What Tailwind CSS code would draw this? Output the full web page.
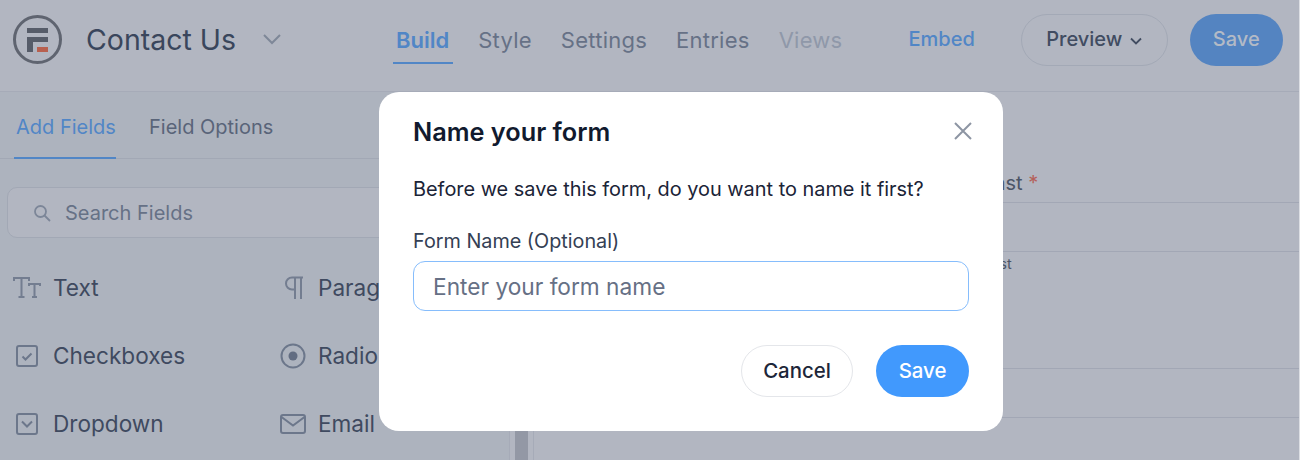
<!DOCTYPE html>
<html lang="en">
<head>
  <meta charset="UTF-8" />
  <meta name="viewport" content="width=device-width, initial-scale=1.0" />
  <title>Contact Us</title>
  <script src="https://cdn.jsdelivr.net/npm/@tailwindcss/browser@4"></script>
</head>
<body class="bg-[#b2b6c1] font-['Inter',sans-serif]">
  <div class="relative w-[1300px] h-[460px] overflow-hidden border-r border-[#dcdee3] box-border">

    <!-- top bar -->
    <header class="h-[92px] flex items-start border-b border-[#a6abb8]">
      <svg class="mt-[15px] ml-[13px] shrink-0" width="50" height="50" viewBox="0 0 50 50">
        <circle cx="24.5" cy="24.5" r="23" fill="none" stroke="#5f6470" stroke-width="3"/>
        <path d="M14 13h21v5H14zM14 22h21v5H20v10h-6z" fill="#565c69"/>
        <path d="M24 32h11v5H24z" fill="#b8604f"/>
      </svg>
      <span class="ml-[23px] mt-[21px] text-[28.5px] leading-[38px] text-[#3a465c] w-[150px] whitespace-nowrap">Contact Us</span>
      <svg class="ml-[27px] mt-[33px]" width="18" height="12" viewBox="0 0 18 12"><path d="M1 2l8 8 8-8" fill="none" stroke="#7e8798" stroke-width="2"/></svg>
      <nav class="ml-[115px] flex gap-[29px] text-[22px] tracking-[0.25px] leading-[30px] h-[65px] pt-[25px]">
        <a class="relative font-semibold tracking-normal text-[#5186c6]">Build<span class="absolute -left-[3px] -right-[4px] top-[37px] h-[2px] bg-[#5186c6]"></span></a>
        <a class="text-[#667186]">Style</a>
        <a class="text-[#667186]">Settings</a>
        <a class="text-[#667186]">Entries</a>
        <a class="text-[#8f98a9]">Views</a>
      </nav>
      <a class="ml-[66px] mt-[26px] text-[20px] leading-[26px] font-medium text-[#5186c6]">Embed</a>
      <button class="ml-[46px] mt-[14px] w-[147px] h-[52px] rounded-full border border-[#a3a9b6] flex items-center justify-center gap-[8px] pb-[2px] text-[20px] font-medium text-[#414c61]">
        Preview
        <svg class="mt-[3px]" width="12" height="8" viewBox="0 0 12 8"><path d="M1 1.5l5 5 5-5" fill="none" stroke="#414c61" stroke-width="1.8"/></svg>
      </button>
      <button class="ml-[22px] mt-[14px] w-[93px] h-[52px] rounded-full bg-[#5484c1] pb-[2px] text-[20px] font-medium text-[#b3bac6]">Save</button>
    </header>

    <div class="flex h-[368px]">
      <!-- field sidebar -->
      <aside class="w-[510px] shrink-0 bg-[#adb3be] border-r border-[#a6abb8]">
        <div class="h-[67px] flex items-start border-b border-[#a2a8b5] pl-[14px]">
          <a class="mt-[20px] relative h-[46px] w-[102px] pl-[2px] text-[20px] leading-[30px] text-[#5186c6]">Add Fields<span class="absolute left-0 right-0 bottom-[-1px] h-[2px] bg-[#5186c6]"></span></a>
          <a class="mt-[20px] ml-[33px] text-[20px] leading-[30px] text-[#596479]">Field Options</a>
        </div>
        <div class="ml-[7px] mt-[28px] h-[51px] w-[500px] rounded-[10px] border border-[#a2a8b5] bg-[#b2b6c1] flex items-center pl-[25px]">
          <svg width="18" height="18" viewBox="0 0 18 18" fill="none" stroke="#7c8698" stroke-width="1.8"><circle cx="7.5" cy="7.5" r="5.5"/><path d="M11.5 11.5l5.5 5.5"/></svg>
          <span class="ml-[14px] text-[20px] text-[#667186]">Search Fields</span>
        </div>
        <ul class="mt-[35px] grid grid-cols-[267px_1fr] gap-y-[38px] pl-[13px] text-[22.6px] leading-[30px] text-[#3f4a60] whitespace-nowrap">
          <li class="flex items-center">
            <svg width="28" height="24" viewBox="0 0 28 24" fill="none" stroke="#737d90" stroke-width="2"><path d="M1 5V2h15v3M8.500 2v19M5.500 21h6M16 10V8h11v2M21.500 8v13M19 21h5"/></svg>
            <span class="ml-[12px]">Text</span>
          </li>
          <li class="flex items-center">
            <svg class="ml-[3px]" width="22" height="24" viewBox="0 0 22 24" fill="none" stroke="#737d90" stroke-width="2"><path d="M20 1.500H9a6 6 0 0 0 0 12h3M12 1.500V23M18 1.500V23"/></svg>
            <span class="ml-[13px]">Paragraph</span>
          </li>
          <li class="flex items-center">
            <svg class="ml-[3px]" width="22" height="22" viewBox="0 0 22 22" fill="none" stroke="#6c778b" stroke-width="2"><rect x="1" y="1" width="20" height="20" rx="2"/><path d="M6.500 11.500l3 3 6-6"/></svg>
            <span class="ml-[15px]">Checkboxes</span>
          </li>
          <li class="flex items-center">
            <svg width="26" height="26" viewBox="0 0 26 26"><circle cx="13" cy="13" r="11.500" fill="none" stroke="#6c778b" stroke-width="2"/><circle cx="13" cy="13" r="4.500" fill="#626d82"/></svg>
            <span class="ml-[12px]">Radio Buttons</span>
          </li>
          <li class="flex items-center">
            <svg class="ml-[3px]" width="22" height="22" viewBox="0 0 22 22" fill="none" stroke="#6c778b" stroke-width="2"><rect x="1" y="1" width="20" height="20" rx="2"/><path d="M6 8.500l5 5 5-5"/></svg>
            <span class="ml-[15px]">Dropdown</span>
          </li>
          <li class="flex items-center">
            <svg width="26" height="20" viewBox="0 0 26 20" fill="none" stroke="#6c778b" stroke-width="2"><rect x="1" y="1" width="24" height="18" rx="2"/><path d="M1.500 3l11.500 8.500L24.500 3"/></svg>
            <span class="ml-[12px]">Email</span>
          </li>
        </ul>
      </aside>

      <!-- scrollbar -->
      <div class="w-[24px] shrink-0 flex justify-center border-r border-[#a6abb8] bg-[#b2b6c1]">
        <div class="w-[13px] h-full bg-[#9398a5]"></div>
      </div>

      <!-- form preview -->
      <main class="flex-1 pl-[449px] pt-[78px]">
        <p class="h-[32px] text-[20px] leading-[26px] text-[#4b5567]">Last <span class="text-[#b5615a]">*</span></p>
        <div class="h-[50px] border-y border-[#a2a7b5] -ml-[110px]"></div>
        <p class="h-[116px] text-[14.5px] leading-[24px] text-[#4b5567]">Last</p>
        <div class="h-[50px] border-y border-[#a2a7b5] -ml-[110px]"></div>
      </main>
    </div>

    <!-- dialog -->
    <div class="absolute left-[379px] top-[92px] w-[624px] h-[339px] rounded-[20px] bg-white px-[34px] pt-[23px]">
      <div class="flex items-start justify-between">
        <h2 class="text-[25.3px] leading-[33px] font-semibold text-[#111a2e]">Name your form</h2>
        <svg class="mt-[7px] -mr-[3px]" width="18" height="18" viewBox="0 0 18 18" fill="none" stroke="#8d95a3" stroke-width="2"><path d="M1 1l16 16M17 1L1 17"/></svg>
      </div>
      <p class="mt-[26px] text-[19.9px] leading-[30px] text-[#1b2437]">Before we save this form, do you want to name it first?</p>
      <label class="block mt-[22px] text-[19.8px] leading-[30px] text-[#344054]">Form Name (Optional)</label>
      <input class="block mt-[5px] w-full h-[50px] rounded-[12px] border border-[#86bdfc] px-[19px] text-[22.7px] outline-none placeholder:text-[#667085]" placeholder="Enter your form name" />
      <div class="mt-[34px] flex justify-end gap-[23px]">
        <button class="w-[112px] h-[52px] rounded-full border border-[#e4e6ea] text-[20.4px] font-[550] text-[#1d2639]">Cancel</button>
        <button class="w-[93px] h-[52px] rounded-full bg-[#4199fd] text-[20.4px] font-[550] text-white">Save</button>
      </div>
    </div>
  </div>
</body>
</html>
